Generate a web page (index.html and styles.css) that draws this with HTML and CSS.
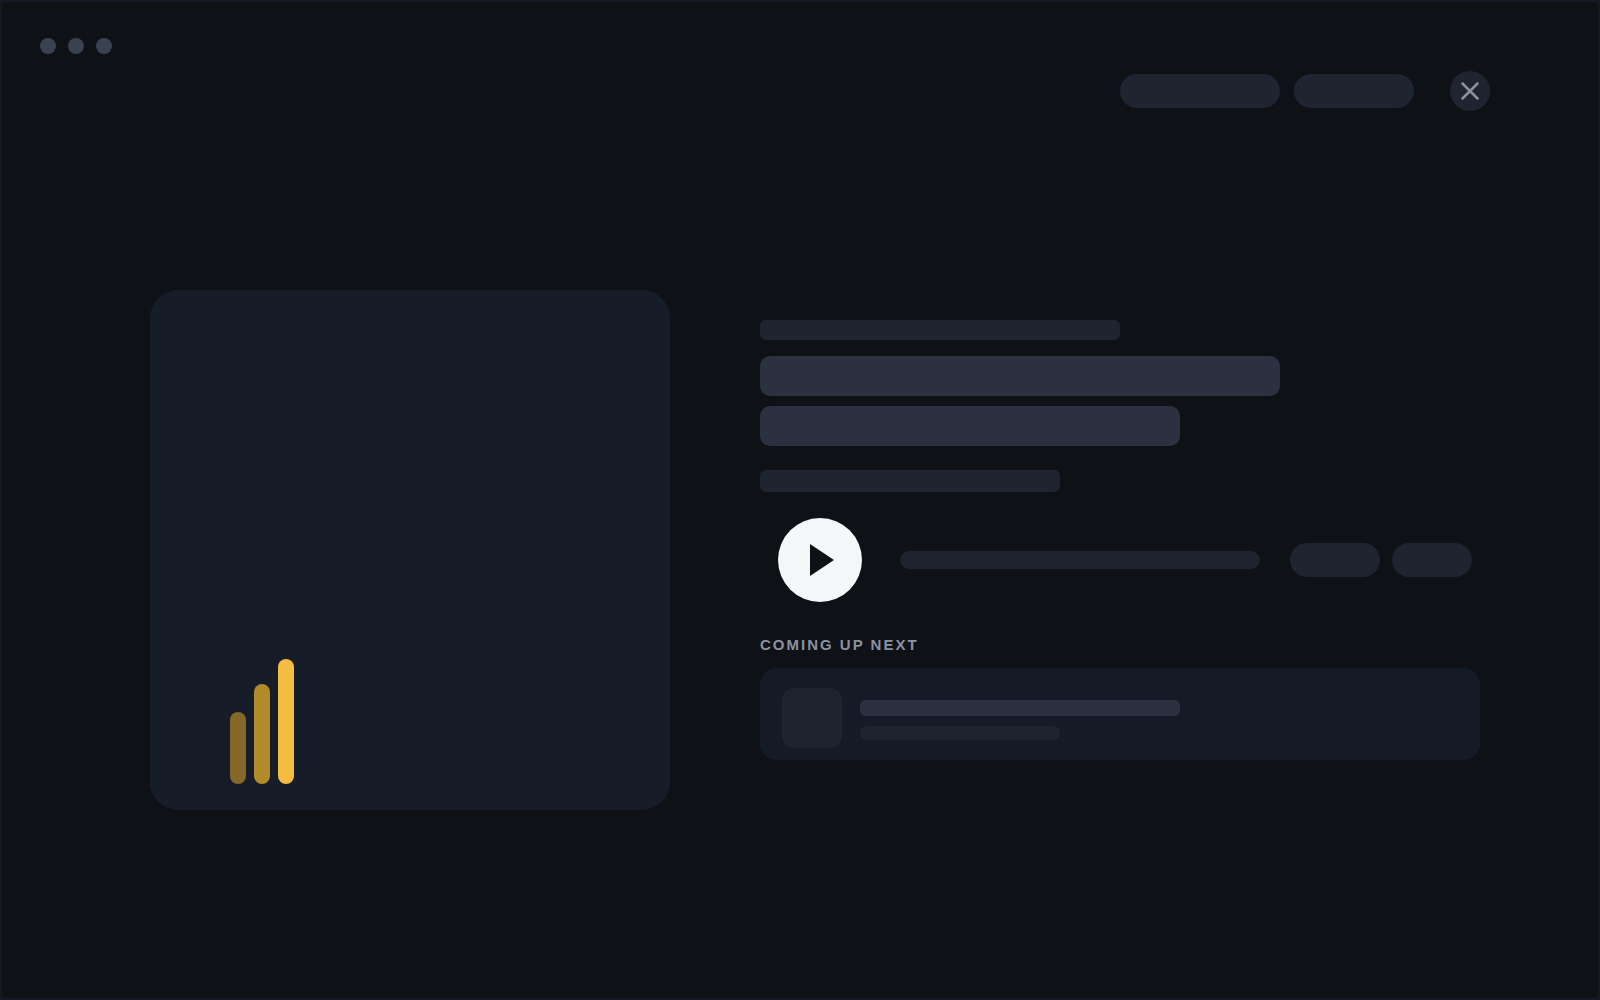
FILE: index.html
```html
<!DOCTYPE html>
<html lang="en">
<head>
    <meta charset="UTF-8">
    <meta name="viewport" content="width=device-width, initial-scale=1.0">
    <title>Player</title>

    <link rel="stylesheet" href="styles.css">
</head>
<body>
    <div class="window">
        <div class="titlebar">
            <span class="dot"></span>
            <span class="dot"></span>
            <span class="dot"></span>
        </div>

        <header class="toolbar">
            <div class="pill pill-xl"></div>
            <div class="pill pill-lg"></div>
            <button class="close" type="button" aria-label="Close">
                <svg width="20" height="20" viewBox="0 0 20 20" fill="none" stroke="currentColor" stroke-width="2.5" stroke-linecap="round">
                    <path d="M2.5 2.5l15 15M17.5 2.5l-15 15"/>
                </svg>
            </button>
        </header>

        <main class="player">
            <div class="artwork">
                <div class="bars">
                    <span class="bar bar-low"></span>
                    <span class="bar bar-mid"></span>
                    <span class="bar bar-high"></span>
                </div>
            </div>

            <div class="details">
                <div class="line line-show"></div>
                <div class="titles">
                    <div class="title title-first"></div>
                    <div class="title title-second"></div>
                </div>
                <div class="line line-meta"></div>

                <div class="controls">
                    <button class="play" type="button" aria-label="Play">
                        <svg width="24" height="32" viewBox="0 0 24 32" fill="currentColor">
                            <path d="M0 0l24 16L0 32z"/>
                        </svg>
                    </button>
                    <div class="track"></div>
                    <div class="options">
                        <div class="pill pill-md"></div>
                        <div class="pill pill-sm"></div>
                    </div>
                </div>

                <h2 class="next-label">COMING UP NEXT</h2>
                <div class="next-card">
                    <div class="thumb"></div>
                    <div class="next-text">
                        <div class="next-title"></div>
                        <div class="next-meta"></div>
                    </div>
                </div>
            </div>
        </main>
    </div>
</body>
</html>
```

FILE: styles.css
```css
* {
    box-sizing: border-box;
}

body {
    margin: 0;
    font-family: "Liberation Sans", Arial, sans-serif;
    background-color: #0e1116;
}

button {
    display: flex;
    align-items: center;
    justify-content: center;
    padding: 0;
    border: 0;
    border-radius: 50%;
    cursor: pointer;
}

.window {
    min-height: 100vh;
    border: 2px solid #151924;
}

.titlebar {
    display: flex;
    gap: 12px;
    padding: 36px 38px 0;
}

.dot {
    width: 16px;
    height: 16px;
    border-radius: 50%;
    background: #3a4150;
}

/* Toolbar */
.toolbar {
    display: flex;
    justify-content: flex-end;
    align-items: center;
    gap: 14px;
    padding: 17px 108px 0;
}

.pill {
    height: 34px;
    border-radius: 17px;
    background: #1e2430;
}

.pill-xl {
    width: 160px;
}

.pill-lg {
    width: 120px;
}

.pill-md {
    width: 90px;
}

.pill-sm {
    width: 80px;
}

.close {
    width: 40px;
    height: 40px;
    margin-left: 22px;
    background: #1e2430;
    color: #8b91a0;
}

/* Player */
.player {
    display: grid;
    grid-template-columns: 13fr 18fr;
    gap: 90px;
    align-items: start;
    padding: 179px 118px 40px 148px;
}

.artwork {
    display: flex;
    align-items: flex-end;
    aspect-ratio: 1;
    padding: 26px 80px;
    border-radius: 28px;
    background: #171d28;
}

.bars {
    display: flex;
    align-items: flex-end;
    gap: 8px;
}

.bar {
    width: 16px;
    border-radius: 8px;
    background: #f5bd3f;
}

.bar-low {
    height: 72px;
    background: #846928;
}

.bar-mid {
    height: 100px;
    background: #b28b2a;
}

.bar-high {
    height: 125px;
}

.details {
    padding-top: 30px;
}

.line {
    max-width: 100%;
    border-radius: 6px;
    background: #1e2430;
}

.line-show {
    width: 360px;
    height: 20px;
}

.line-meta {
    width: 300px;
    height: 22px;
}

.titles {
    display: flex;
    flex-direction: column;
    gap: 10px;
    margin: 16px 0 24px;
}

.title {
    max-width: 100%;
    height: 40px;
    border-radius: 10px;
    background: #2c3141;
}

.title-first {
    width: 520px;
}

.title-second {
    width: 420px;
}

.controls {
    display: flex;
    align-items: center;
    margin-top: 26px;
    padding: 0 8px 0 18px;
}

.play {
    flex-shrink: 0;
    width: 84px;
    height: 84px;
    padding-left: 4px;
    background: #f5f6f8;
    color: #0e1116;
}

.track {
    flex: 1;
    height: 18px;
    margin: 0 30px 0 38px;
    border-radius: 9px;
    background: #1e2430;
}

.options {
    display: flex;
    gap: 12px;
}

/* Coming up next */
.next-label {
    margin: 33px 0 13px;
    font-size: 15px;
    line-height: 20px;
    letter-spacing: 2px;
    color: #8b91a0;
}

.next-card {
    display: flex;
    gap: 18px;
    padding: 20px 22px 12px;
    border-radius: 16px;
    background: #141b26;
}

.thumb {
    flex-shrink: 0;
    width: 60px;
    height: 60px;
    border-radius: 12px;
    background: #1e242f;
}

.next-text {
    display: flex;
    flex: 1;
    flex-direction: column;
    gap: 10px;
    padding-top: 12px;
}

.next-title {
    width: 320px;
    max-width: 100%;
    height: 16px;
    border-radius: 6px;
    background: #2c3141;
}

.next-meta {
    width: 200px;
    max-width: 100%;
    height: 14px;
    border-radius: 6px;
    background: #1e242f;
}
```
